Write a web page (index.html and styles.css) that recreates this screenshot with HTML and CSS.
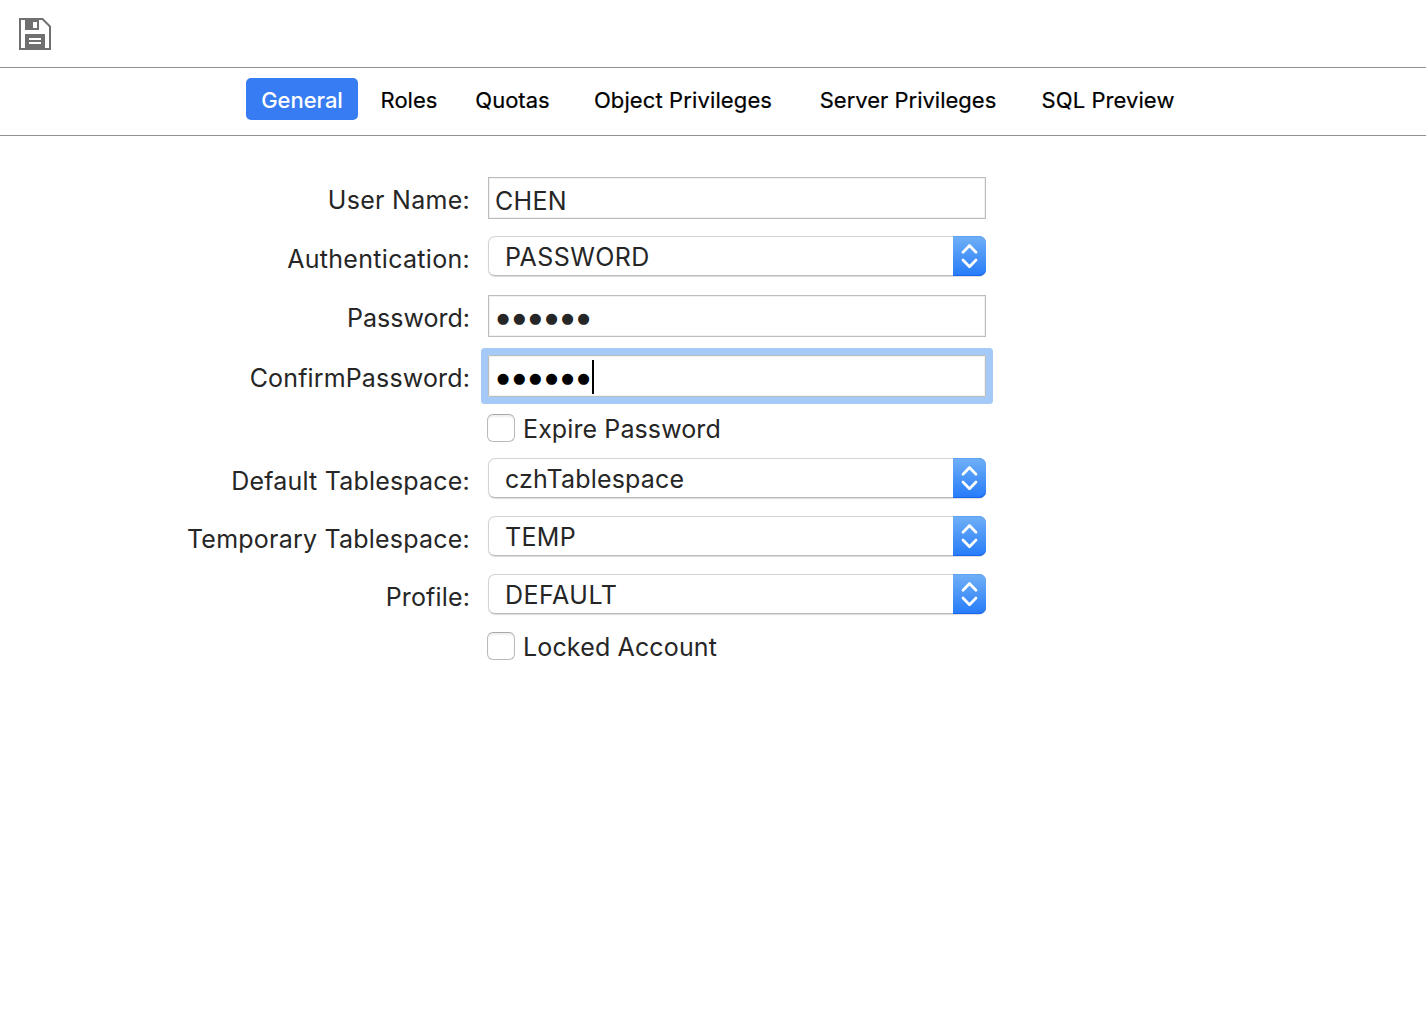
FILE: index.html
```html
<!DOCTYPE html>
<html lang="en">
<head>
<meta charset="utf-8">
<title>User</title>
<link rel="stylesheet" href="styles.css">
</head>
<body>
<svg class="defs" width="0" height="0" aria-hidden="true">
  <symbol id="chevrons" viewBox="0 0 33 40">
    <path d="M10 16.2 L16.5 9.5 L23 16.2 M10 24 L16.5 30.7 L23 24" fill="none" stroke="#fff" stroke-width="2.7" stroke-linecap="round" stroke-linejoin="round"/>
  </symbol>
</svg>
<header class="toolbar">
  <svg class="save" width="32" height="32" viewBox="0 0 32 32" role="img" aria-label="Save">
    <path d="M1 1H23.5L31 8.5V31H1Z" fill="#fff" stroke="#707070" stroke-width="2"/>
    <path d="M6 1H20V12H6Z M14 4V10H18V4Z" fill="#707070" fill-rule="evenodd"/>
    <path d="M6 16H26V31H6Z M10 20V22H22V20Z M10 24V26H22V24Z" fill="#707070" fill-rule="evenodd"/>
  </svg>
</header>
<nav class="tabs">
  <a class="tab active">General</a>
  <a class="tab roles">Roles</a>
  <a class="tab quotas">Quotas</a>
  <a class="tab object">Object Privileges</a>
  <a class="tab server">Server Privileges</a>
  <a class="tab sql">SQL Preview</a>
</nav>
<main class="form">
  <label class="label user">User Name:</label>
  <div class="field"><span class="chen">CHEN</span></div>
  <label class="label auth">Authentication:</label>
  <div class="select"><span class="value v-auth">PASSWORD</span><span class="arrows"><svg width="33" height="40"><use href="#chevrons"/></svg></span></div>
  <label class="label pass">Password:</label>
  <div class="field"><span class="dots">●●●●●●</span></div>
  <label class="label confirm">ConfirmPassword:</label>
  <div class="field focused"><span class="dots">●●●●●●</span><span class="caret"></span></div>
  <div class="check"><span class="box"></span><span class="check-text expire">Expire Password</span></div>
  <label class="label deftab">Default Tablespace:</label>
  <div class="select"><span class="value v-tab">czhTablespace</span><span class="arrows"><svg width="33" height="40"><use href="#chevrons"/></svg></span></div>
  <label class="label temptab">Temporary Tablespace:</label>
  <div class="select"><span class="value v-temp">TEMP</span><span class="arrows"><svg width="33" height="40"><use href="#chevrons"/></svg></span></div>
  <label class="label profile">Profile:</label>
  <div class="select"><span class="value v-prof">DEFAULT</span><span class="arrows"><svg width="33" height="40"><use href="#chevrons"/></svg></span></div>
  <div class="check"><span class="box"></span><span class="check-text locked">Locked Account</span></div>
</main>
</body>
</html>
```

FILE: styles.css
```css
* { box-sizing: border-box; }
body {
  margin: 0;
  min-height: 1022px;
  background: #fff;
  color: #262626;
  font-family: Inter, "Liberation Sans", sans-serif;
  font-size: 25px;
  white-space: nowrap;
}
.defs { display: block; }
.toolbar {
  height: 68px;
  padding: 18px 19px;
  border-bottom: 1px solid #919191;
}
.save { display: block; }
.tabs {
  display: flex;
  height: 68px;
  padding: 10px 0 0 246px;
  border-bottom: 1px solid #919191;
  font-size: 22px;
  color: #000;
}
.tab {
  width: 112px;
  height: 42px;
  padding-top: 1px;
  line-height: 42px;
  text-align: center;
  -webkit-text-stroke: .2px currentColor;
}
.tab.active {
  background: #377cf2;
  color: #fff;
  border-radius: 5px;
  font-weight: 500;
  letter-spacing: -.05px;
  -webkit-text-stroke: 0;
}
.tab.roles { width: 102px; }
.tab.quotas { width: 105px; }
.tab.object { width: 236px; letter-spacing: .12px; }
.tab.server { width: 214px; }
.tab.sql { width: 186px; letter-spacing: .08px; }

.form {
  display: grid;
  grid-template-columns: 470px 498px;
  grid-template-rows: 59px 59px 60px 59px 44px 58px 58px 58px 44px;
  column-gap: 18px;
  padding-top: 41px;
  align-items: start;
}
.label { text-align: right; line-height: 46px; }
.label.user { letter-spacing: .28px; }
.label.auth { letter-spacing: .3px; }
.label.confirm { letter-spacing: .15px; }
.label.deftab { letter-spacing: .2px; }
.label.temptab { letter-spacing: .22px; }
.label.profile { letter-spacing: .15px; }
.field {
  display: flex;
  height: 42px;
  padding-left: 6px;
  border: 1px solid #bcbcbc;
  box-shadow: inset 0 0 0 1px #f1f1f1;
  line-height: 46px;
}
.chen { letter-spacing: .3px; }
.field.focused {
  color: #000;
  border-color: #b9bcc1;
  box-shadow: 0 0 0 7px #a6caf8, inset 0 0 0 1px #f1f1f1;
  border-radius: 1px;
}
.dots {
  padding-left: 1.8px;
  font-family: "DejaVu Sans", sans-serif;
  font-size: 14.5px;
  line-height: 45px;
  letter-spacing: 3.46px;
}
.caret { width: 2px; height: 34px; margin: 4px 0 0 -1.6px; background: #000; }
.select {
  display: flex;
  justify-content: space-between;
  height: 40px;
  border: 1px solid #d3d3d3;
  border-bottom-color: #bbb;
  border-radius: 7px;
  box-shadow: 0 1px 1px rgba(0, 0, 0, .14);
  line-height: 40px;
}
.value { padding-left: 16px; }
.v-auth { letter-spacing: .43px; }
.v-tab { letter-spacing: .2px; }
.v-temp { letter-spacing: .3px; }
.v-prof { letter-spacing: .5px; }
.arrows {
  width: 33px;
  height: 40px;
  margin: -1px -1px 0 0;
  border-radius: 0 7px 7px 0;
  background: linear-gradient(#70b0f7, #267bf9);
  box-shadow: inset 0 -1px 0 #1766ed, inset 0 1px 0 #5ea3f2;
}
.arrows svg { display: block; }
.check {
  grid-column: 2;
  display: flex;
  gap: 8px;
  margin-left: -1px;
  line-height: 30px;
}
.expire { letter-spacing: .1px; }
.locked { letter-spacing: .15px; }
.box {
  width: 28px;
  height: 28px;
  border: 1px solid #bababa;
  border-top-color: #a9a9a9;
  border-radius: 6px;
  box-shadow: inset 0 2px 2px #efefef;
}
```
